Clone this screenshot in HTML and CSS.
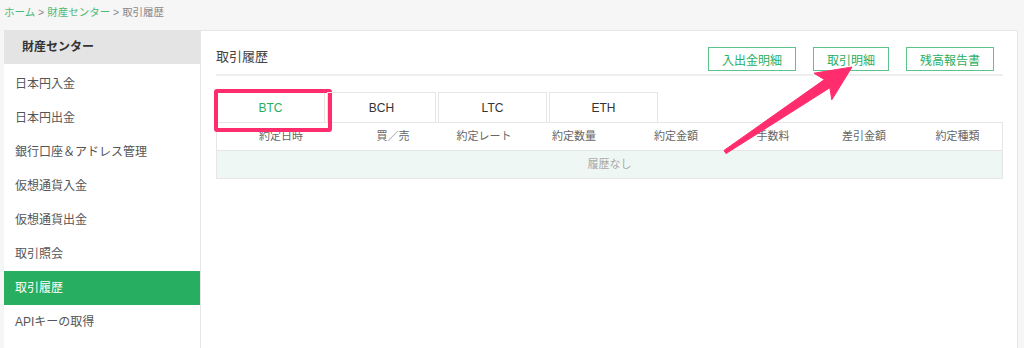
FILE: index.html
```html
<!DOCTYPE html>
<html lang="ja">
<head>
    <meta charset="UTF-8">
    <meta name="viewport" content="width=device-width, initial-scale=1.0">
    <title>取引履歴</title>
    <link rel="stylesheet" href="styles.css">
</head>
<body>
    <div class="breadcrumb">
        <a href="#">ホーム</a> &gt; <a href="#">財産センター</a> &gt; <span>取引履歴</span>
    </div>

    <div class="layout">
        <div class="sidebar">
            <div class="sidebar-title">財産センター</div>
            <ul class="menu">
                <li>日本円入金</li>
                <li>日本円出金</li>
                <li>銀行口座＆アドレス管理</li>
                <li>仮想通貨入金</li>
                <li>仮想通貨出金</li>
                <li>取引照会</li>
                <li class="active">取引履歴</li>
                <li>APIキーの取得</li>
            </ul>
        </div>

        <div class="main">
            <div class="main-header">
                <h2>取引履歴</h2>
                <div class="actions">
                    <button>入出金明細</button>
                    <button>取引明細</button>
                    <button>残高報告書</button>
                </div>
            </div>

            <div class="tabs">
                <div class="tab active">BTC<span class="highlight"></span></div>
                <div class="tab">BCH</div>
                <div class="tab">LTC</div>
                <div class="tab">ETH</div>
            </div>

            <div class="history">
                <div class="history-head">
                    <div>約定日時</div>
                    <div>買／売</div>
                    <div>約定レート</div>
                    <div>約定数量</div>
                    <div>約定金額</div>
                    <div>手数料</div>
                    <div>差引金額</div>
                    <div>約定種類</div>
                </div>
                <div class="history-empty">履歴なし</div>
            </div>
        </div>
    </div>

    <!-- 注釈の矢印 -->
    <svg class="arrow" width="1024" height="348" viewBox="0 0 1024 348">
        <polygon points="852,67 831.8,99.8 829.8,87.8 726,153.6 724,150.4 824.4,79.6 814,73.2" fill="#ff2d6e" stroke="#ff2d6e" stroke-width="1" stroke-linejoin="round"/>
    </svg>
</body>
</html>
```

FILE: styles.css
```css
:root {
    --green: #27ae60;
    --green-light: #5cc48a;
    --text-color: #555;
    --border-color: #e6e6e6;
    --pink: #ff2d6e;
}

* {
    box-sizing: border-box;
    margin: 0;
    padding: 0;
}

body {
    font-family: 'Liberation Sans', 'Noto Sans CJK JP', sans-serif;
    color: var(--text-color);
    background-color: #f6f6f6;
    font-size: 12px;
    height: 348px;
    overflow: hidden;
}

.breadcrumb {
    height: 30px;
    padding: 6px 4px 0;
    font-size: 10.5px;
    line-height: 12px;
    color: #888;
}

.breadcrumb a {
    color: #4cbb7a;
    text-decoration: none;
}

.layout {
    display: flex;
    padding: 0 6px 0 4px;
}

.sidebar {
    width: 196px;
    background: #fff;
    height: 318px;
}

.sidebar-title {
    height: 34px;
    line-height: 34px;
    padding-left: 18px;
    background: #e4e4e4;
    font-weight: bold;
    color: #333;
}

.menu {
    list-style: none;
    padding-top: 3px;
}

.menu li {
    height: 34px;
    line-height: 34px;
    padding-left: 11px;
    color: #555;
}

.menu li.active {
    background: var(--green);
    color: #fff;
}

.main {
    flex: 1;
    background: #fff;
    border: 1px solid var(--border-color);
    border-bottom: none;
    padding: 0 14px 0 15px;
    height: 318px;
}

.main-header {
    display: flex;
    justify-content: space-between;
    align-items: flex-start;
    padding-top: 16px;
    padding-bottom: 3px;
    border-bottom: 2px solid #eee;
}

.main-header h2 {
    font-size: 13px;
    font-weight: normal;
    color: #444;
    line-height: 20px;
}

.actions {
    display: flex;
    gap: 17px;
    padding-right: 9px;
}

.actions button {
    height: 24px;
    padding: 0 13px;
    background: #fff;
    border: 1px solid var(--green-light);
    color: var(--green);
    font-family: inherit;
    font-size: 12px;
}

.tabs {
    display: flex;
    gap: 2px;
    margin-top: 16px;
}

.tab {
    position: relative;
    width: 109px;
    height: 30px;
    line-height: 30px;
    text-align: center;
    border: 1px solid var(--border-color);
    border-bottom: none;
    font-size: 12px;
    color: #333;
}

.tab.active {
    color: var(--green);
}

.highlight {
    position: absolute;
    left: -3px;
    top: -4px;
    right: -8px;
    bottom: -10px;
    border: 4px solid var(--pink);
    border-radius: 3px;
}

.history {
    border: 1px solid var(--border-color);
}

.history-head {
    display: grid;
    grid-template-columns: 128px 96px 86px 94px 110px 84px 98px 1fr;
    height: 28px;
    line-height: 26px;
    text-align: center;
    font-size: 11px;
    color: #666;
    border-bottom: 1px solid var(--border-color);
}

.history-empty {
    height: 27px;
    line-height: 27px;
    text-align: center;
    font-size: 11px;
    color: #aaa;
    background: #eef7f3;
}

.arrow {
    position: absolute;
    left: 0;
    top: 0;
    pointer-events: none;
}
```
